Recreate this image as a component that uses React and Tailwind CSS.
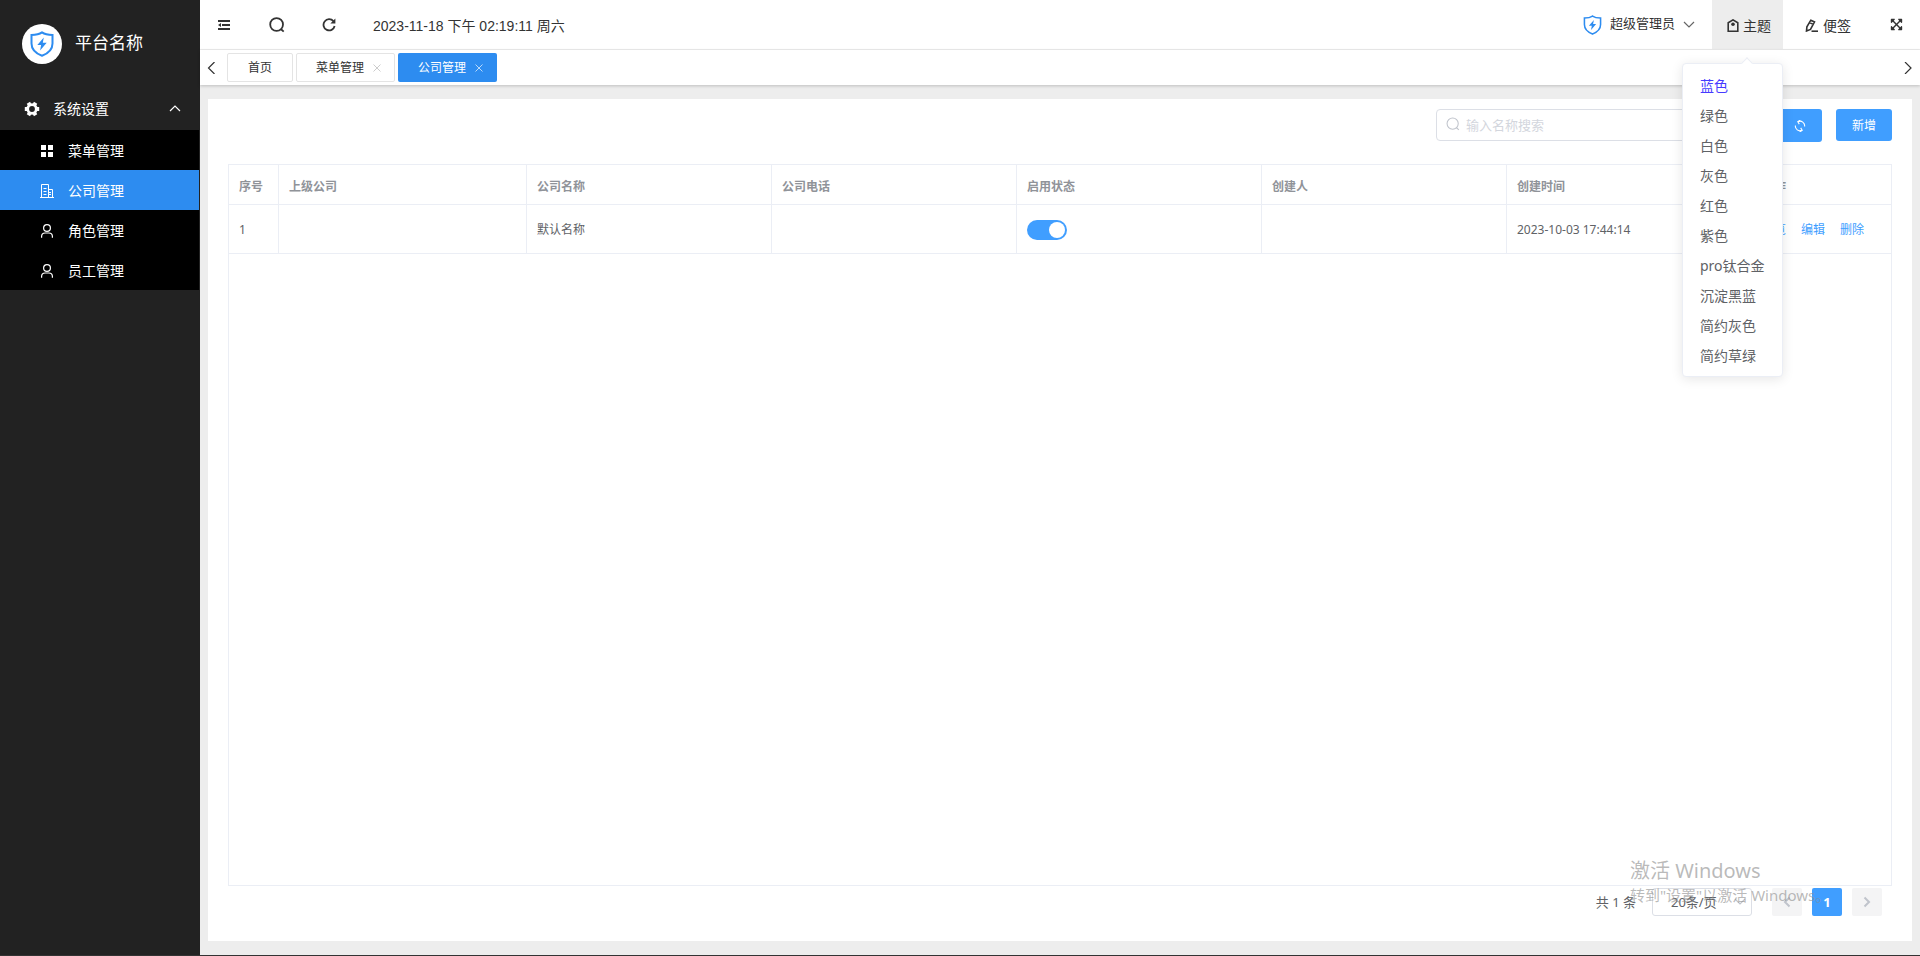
import React, { useState } from 'react';
import { FaExpandArrowsAlt } from 'react-icons/fa';

const themes = ['蓝色', '绿色', '白色', '灰色', '红色', '紫色', 'pro钛合金', '沉淀黑蓝', '简约灰色', '简约草绿'];

const ShieldIcon = ({ className }) => (
    <svg viewBox="0 0 24 26" className={className} fill="none" stroke="#2d8cf0" strokeWidth="2">
        <path d="M12 1.4C9 3.6 5.500 4 1.500 4v8.500C1.500 18.500 6 22.500 12 24.800c6-2.300 10.500-6.300 10.500-12.300V4C18.500 4 15 3.600 12 1.400Z" />
        <path d="M13.800 6.500 7.300 14h3.800l-1 5.500 6.600-7.800h-3.900Z" fill="#2d8cf0" stroke="none" />
    </svg>
);

const GearIcon = () => (
    <svg viewBox="0 0 16 16" className="size-4" fill="none" stroke="currentColor">
        <circle cx="8" cy="8" r="4.300" strokeWidth="2.800" />
        <path d="M13 8h2.200M.8 8H3M10.500 3.700l1.100-1.900M4.400 14.200l1.100-1.900M5.500 3.700 4.400 1.800M11.600 14.200l-1.100-1.900" strokeWidth="3.800" />
    </svg>
);

const GridIcon = () => (
    <svg viewBox="0 0 14 14" className="size-3.5" fill="currentColor">
        <path d="M1 1h5v5H1zM8 1h5v5H8zM1 8h5v5H1zM8 8h5v5H8z" />
    </svg>
);

const BuildingIcon = () => (
    <svg viewBox="0 0 14 14" className="size-3.5" fill="none" stroke="currentColor">
        <path d="M0 13.500h14M1.500 13.500V.5h7v13M8.500 5.500h4v8M3.500 4.500h3M3.500 7.500h3M3.500 10.500h3M9 8.500h2M9 10.500h2" />
    </svg>
);

const UserIcon = () => (
    <svg viewBox="0 0 14 14" className="size-3.5" fill="none" stroke="currentColor" strokeWidth="1.200">
        <circle cx="7" cy="4" r="3.400" />
        <path d="M1.600 13.800v-1.300A3.500 3.500 0 0 1 5.100 9h3.800a3.500 3.500 0 0 1 3.500 3.500v1.300" />
    </svg>
);

const SearchIcon = ({ className, width }) => (
    <svg viewBox="0 0 16 16" className={className} fill="none" stroke="currentColor" strokeWidth={width}>
        <circle cx="7.600" cy="7.500" r="6.400" />
        <path d="m11.800 12 2.900 2.700" />
    </svg>
);

const Chevron = ({ d, className }) => (
    <svg viewBox="0 0 12 12" className={className} fill="none" stroke="currentColor" strokeWidth="1.200">
        <path d={d} />
    </svg>
);

const CloseIcon = () => (
    <svg viewBox="0 0 8 8" className="size-2" fill="none" stroke="currentColor">
        <path d="m.5.5 7 7M7.500.5l-7 7" />
    </svg>
);

const UP = 'm1 8 5-5 5 5';
const DOWN = 'm1 3 5 5 5-5';
const LEFT = 'M9 0 3 6l6 6';
const RIGHT = 'm3 0 6 6-6 6';

const menu = [
    { name: '菜单管理', icon: GridIcon },
    { name: '公司管理', icon: BuildingIcon },
    { name: '角色管理', icon: UserIcon },
    { name: '员工管理', icon: UserIcon },
];

const Sidebar = () => (
    <aside className="w-[200px] shrink-0 bg-[#222] text-white">
        <div className="flex h-[87px] items-center gap-[13px] pl-[22px]">
            <span className="flex size-10 items-center justify-center rounded-full bg-white">
                <ShieldIcon className="h-[26px] w-6" />
            </span>
            <span className="pb-0.5 text-[17px] leading-10">平台名称</span>
        </div>
        <button className="flex h-[43px] w-full items-center pr-[19px] pl-6 text-sm">
            <GearIcon />
            <span className="ml-[13px] flex-1 text-left">系统设置</span>
            <Chevron d={UP} className="size-3" />
        </button>
        <nav className="mr-px bg-black">
            {menu.map(({ name, icon: Icon }) => (
                <a
                    key={name}
                    href="#"
                    className={`flex h-10 items-center gap-3.5 pt-0.5 pl-10 text-sm ${name === '公司管理' ? 'bg-[#2d8cf0]' : ''}`}
                >
                    <Icon />
                    {name}
                </a>
            ))}
        </nav>
    </aside>
);

const ThemeMenu = () => (
    <div className="absolute top-[63px] right-0 z-20 w-[101px] rounded border border-[#ebeef5] bg-white pt-[7px] pb-[5px] shadow-[0_2px_12px_rgba(0,0,0,0.1)]">
        <span className="absolute -top-[5px] left-[60px] size-2 rotate-45 border-t border-l border-[#ebeef5] bg-white" />
        {themes.map((theme) => (
            <button
                key={theme}
                className={`block h-[30px] w-full pl-[17px] text-left text-sm ${theme === '蓝色' ? 'text-[#473bff]' : 'text-[#606266]'}`}
            >
                {theme}
            </button>
        ))}
    </div>
);

const Header = () => (
    <header className="flex h-[50px] items-center border-b border-[#ededed] bg-white text-[#333]">
        <button aria-label="收起菜单" className="ml-[18px]">
            <svg viewBox="0 0 12 10" className="h-2.5 w-3" fill="currentColor">
                <path d="M0 0h12v2H0zM4 4h8v2H4zM0 8h12v2H0zM0 5l3-2v4z" />
            </svg>
        </button>
        <button aria-label="搜索" className="ml-[39px]">
            <SearchIcon className="size-4" width="1.800" />
        </button>
        <button aria-label="刷新" className="ml-[37px]">
            <svg viewBox="0 0 14 14" className="size-3.5" fill="none" stroke="currentColor" strokeWidth="1.800">
                <path d="M11.400 3.200A5.600 5.600 0 1 0 12.600 8" />
                <path d="M13.400.5v5H8.400z" fill="currentColor" stroke="none" />
            </svg>
        </button>
        <time className="ml-[37px] pt-0.5 font-['Liberation_Sans','Noto_Sans_CJK_SC',sans-serif] text-sm">2023-11-18 下午 02:19:11 周六</time>

        <button className="ml-auto flex items-center text-[13px]">
            <ShieldIcon className="mr-2 h-5 w-[19px]" />
            <span className="pb-0.5">超级管理员</span>
            <Chevron d={DOWN} className="mr-[17px] ml-2 size-3 text-[#666]" />
        </button>
        <div className="relative h-[49px] self-start bg-[#ededed]">
            <button className="flex h-full w-[71px] items-center justify-center gap-1 pt-0.5 pl-[3px] text-sm">
                <svg viewBox="0 0 12 13" className="h-[13px] w-3" fill="none" stroke="currentColor" strokeWidth="1.600">
                    <path d="M1.200 12.200V3.800L6 .9l4.800 2.900v8.400Z" />
                    <circle cx="6" cy="5.200" r="1.800" fill="currentColor" stroke="none" />
                </svg>
                主题
            </button>
            <ThemeMenu />
        </div>
        <button className="ml-[22px] flex items-center gap-1 pt-0.5 text-sm">
            <svg viewBox="0 0 14 13" className="h-[13px] w-3.5" fill="none" stroke="currentColor" strokeWidth="1.600">
                <path d="m5.800 1.200 3.700 1.700-4 7.500L1.500 12l.4-4.200ZM4.500 3.600l3.800 1.800" />
                <path d="M6.500 12.200H13" />
            </svg>
            便签
        </button>
        <button aria-label="全屏" className="mr-[17px] ml-[39px]">
            <FaExpandArrowsAlt size={13} />
        </button>
    </header>
);

const Tabs = () => (
    <div className="relative flex h-[35px] items-center gap-[3px] bg-white pr-1.5 pl-1 text-xs text-[#333] shadow-[0_1px_3px_rgba(0,0,0,0.2)]">
        <button aria-label="向左" className="mr-[5px]">
            <Chevron d={LEFT} className="h-3 w-[15px]" />
        </button>
        <button className="h-[29px] w-[66px] rounded-xs border border-[#e4e4e4]">首页</button>
        <button className="flex h-[29px] w-[99px] items-center gap-[9px] rounded-xs border border-[#e4e4e4] pl-[19px]">
            菜单管理
            <span className="text-[#ccc]"><CloseIcon /></span>
        </button>
        <button className="flex h-[29px] w-[99px] items-center gap-[9px] rounded-xs bg-[#2d8cf0] pl-5 text-white">
            公司管理
            <span className="text-[#b9d9fa]"><CloseIcon /></span>
        </button>
        <button aria-label="向右" className="ml-auto">
            <Chevron d={RIGHT} className="size-3" />
        </button>
    </div>
);

const columns = ['序号', '上级公司', '公司名称', '公司电话', '启用状态', '创建人', '创建时间', '操作'];

const CompanyTable = () => {
    const [enabled, setEnabled] = useState(true);

    return (
        <div className="mt-[22px] flex-1 border border-[#ebeef5]">
            <table className="w-full table-fixed border-separate border-spacing-0 text-left text-xs text-[#606266]">
                <colgroup>
                    <col className="w-[50px]" />
                    <col className="w-[248px]" />
                    <col /><col /><col /><col /><col />
                    <col className="w-[139px]" />
                </colgroup>
                <thead>
                    <tr className="h-10 text-[#909399]">
                        {columns.map((c) => (
                            <th key={c} className="border-r border-b border-[#ebeef5] px-2.5 pt-1 font-bold last:border-r-0">{c}</th>
                        ))}
                    </tr>
                </thead>
                <tbody>
                    <tr className="h-[49px] *:border-r *:border-b *:border-[#ebeef5] *:px-2.5 *:pt-0.5 *:last:border-r-0">
                        <td>1</td>
                        <td></td>
                        <td>默认名称</td>
                        <td></td>
                        <td>
                            <label className="relative block h-5 w-10">
                                <input
                                    type="checkbox"
                                    role="switch"
                                    aria-label="启用状态"
                                    className="peer block h-5 w-10 appearance-none rounded-full bg-[#dcdfe6] checked:bg-[#409eff]"
                                    checked={enabled}
                                    onChange={(e) => setEnabled(e.target.checked)}
                                />
                                <span className="absolute top-0.5 left-0.5 size-4 rounded-full bg-white peer-checked:left-[22px]" />
                            </label>
                        </td>
                        <td></td>
                        <td>2023-10-03 17:44:14</td>
                        <td>
                            <div className="flex gap-[15px] text-[#409eff]">
                                <a href="#">预览</a>
                                <a href="#">编辑</a>
                                <a href="#">删除</a>
                            </div>
                        </td>
                    </tr>
                </tbody>
            </table>
        </div>
    );
};

const Pagination = () => (
    <div className="mt-0.5 mr-2.5 flex h-7 items-center justify-end text-[13px] text-[#606266]">
        <span className="pt-0.5">共 1 条</span>
        <div className="relative mr-5 ml-4">
            <select
                aria-label="每页条数"
                className="block h-7 w-[100px] appearance-none rounded-[3px] border border-[#dcdfe6] bg-white pt-0.5 pl-[18px]"
            >
                <option>20条/页</option>
            </select>
            <Chevron d={DOWN} className="pointer-events-none absolute top-2 right-1.5 size-3 text-[#c0c4cc]" />
        </div>
        <div className="flex gap-2.5 *:flex *:h-7 *:w-[30px] *:items-center *:justify-center *:rounded-xs">
            <button aria-label="上一页" className="bg-[#f4f4f5] text-[#c0c4cc]">
                <Chevron d="M8.500 1.500 4 6l4.500 4.500" className="size-3 stroke-2" />
            </button>
            <button className="bg-[#409eff] pt-0.5 font-bold text-white">1</button>
            <button aria-label="下一页" className="bg-[#f4f4f5] text-[#c0c4cc]">
                <Chevron d="M3.500 1.500 8 6l-4.500 4.500" className="size-3 stroke-2" />
            </button>
        </div>
    </div>
);

const App = () => {
    const [keyword, setKeyword] = useState('');

    return (
        <div className="flex min-h-screen flex-col bg-[#ededed] font-['Noto_Sans','Noto_Sans_CJK_SC',sans-serif]">
            <div className="flex flex-1">
                <Sidebar />
                <div className="flex min-w-0 flex-1 flex-col">
                    <div className="relative z-10">
                        <Header />
                        <Tabs />
                    </div>
                    <main className="mx-2 mt-3.5 mb-3.5 flex flex-1 flex-col bg-white px-5 pt-2.5 pb-[25px]">
                        <div className="flex items-start justify-end">
                            <div className="relative">
                                <SearchIcon className="absolute top-2 left-2.5 size-3.5 text-[#c0c4cc]" width="1.200" />
                                <input
                                    type="text"
                                    aria-label="输入名称搜索"
                                    placeholder="输入名称搜索"
                                    className="block h-8 w-[330px] rounded-l border border-[#dcdfe6] pl-[29px] text-[13px] text-[#606266] placeholder:text-[#d3d6dd] focus:outline-none"
                                    value={keyword}
                                    onChange={(e) => setKeyword(e.target.value)}
                                />
                            </div>
                            <button aria-label="重置" className="flex h-[33px] w-14 items-center justify-end rounded-r-[3px] bg-[#409eff] pr-4 text-white">
                                <svg viewBox="0 0 12 12" className="size-3" fill="none" stroke="currentColor" strokeWidth="1.100">
                                    <path d="M4 1.700a4.600 4.600 0 0 1 6.600 4.800M8 10.300A4.600 4.600 0 0 1 1.400 5.500" />
                                    <path d="M6.200.2 3.800 1.700l1.500 2.400M5.800 11.800l2.400-1.500-1.500-2.400" />
                                </svg>
                            </button>
                            <button className="ml-3.5 h-8 w-14 rounded-[3px] bg-[#409eff] pt-0.5 text-xs text-white">新增</button>
                        </div>
                        <CompanyTable />
                        <Pagination />
                    </main>
                </div>
            </div>
            <div className="h-px bg-[#333]" />
            <div className="pointer-events-none absolute right-0 bottom-[51px] w-[290px] text-[#8c8c8c]/60">
                <p className="text-xl leading-7">激活 Windows</p>
                <p className="text-[15px] leading-5">转到"设置"以激活 Windows。</p>
            </div>
        </div>
    );
};

export default App;
